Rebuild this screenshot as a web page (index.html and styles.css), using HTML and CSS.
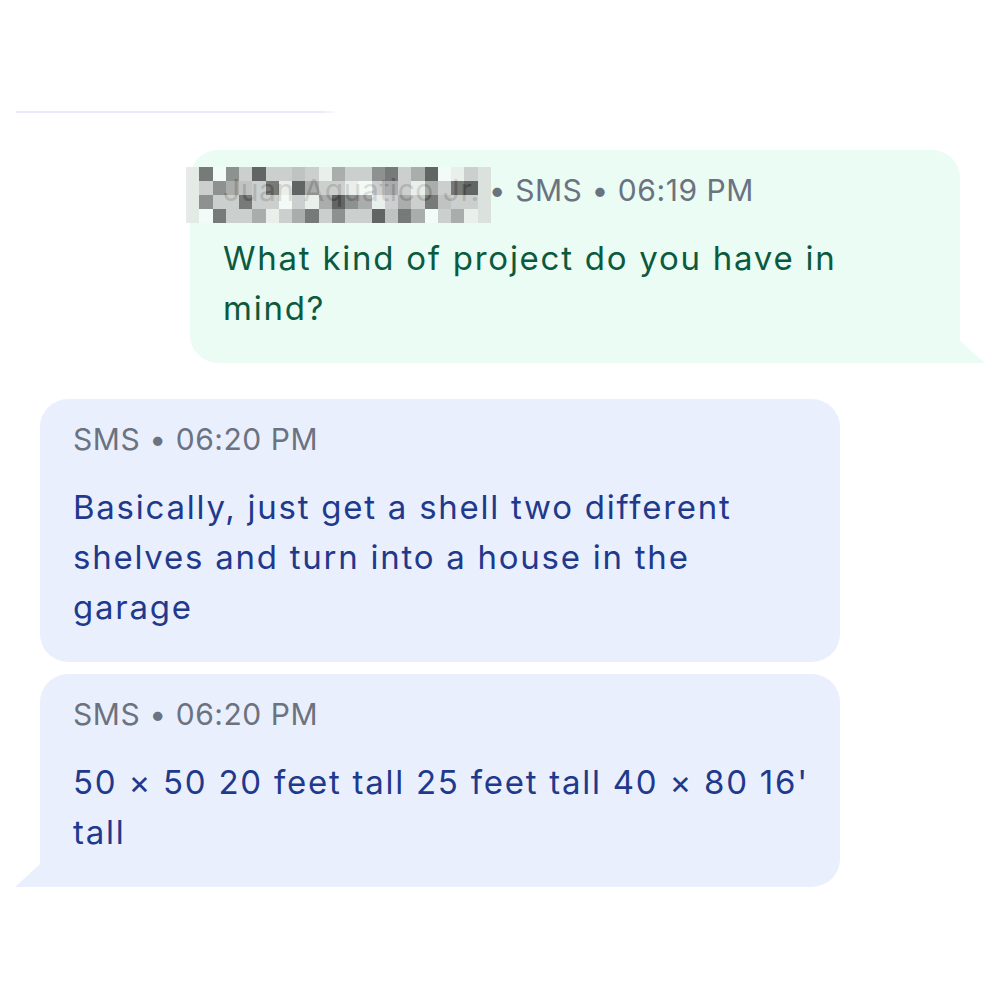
FILE: index.html
```html
<!DOCTYPE html>
<html>
<head>
<meta charset="utf-8">
<link rel="stylesheet" href="styles.css">
</head>
<body>
<div class="thread">
  <div class="divider"></div>
  <div class="bubble out">
    <div class="meta"><span class="name">Juan Aquatico Jr.<span class="mosaic"><i></i><i></i><i></i><i></i><i></i><i></i><i></i><i></i><i></i><i></i><i></i><i></i><i></i><i></i><i></i><i></i><i></i><i></i><i></i><i></i><i></i><i></i><i></i><i></i><i></i><i></i><i></i><i></i><i></i><i></i><i></i><i></i><i></i><i></i><i></i><i></i><i></i><i></i><i></i><i></i><i></i><i></i><i></i><i></i><i></i><i></i><i></i><i></i><i></i><i></i><i></i><i></i><i></i><i></i><i></i><i></i><i></i><i></i><i></i><i></i><i></i><i></i><i></i><i></i><i></i><i></i><i></i><i></i><i></i><i></i><i></i><i></i><i></i><i></i><i></i><i></i><i></i><i></i><i></i><i></i><i></i><i></i><i></i><i></i><i></i><i></i><i></i><i></i><i></i><i></i><i></i><i></i></span></span> <span class="dot">•</span> SMS <span class="dot">•</span> 06:19 PM</div>
    <div class="text">What kind of project do you have in mind?</div>
    <span class="tail"></span>
  </div>
  <div class="bubble in first">
    <div class="meta">SMS <span class="dot">•</span> 06:20 PM</div>
    <div class="text">Basically, just get a shell two different shelves and turn into a house in the garage</div>
  </div>
  <div class="bubble in last">
    <div class="meta">SMS <span class="dot">•</span> 06:20 PM</div>
    <div class="text">50 × 50 20 feet tall 25 feet tall 40 × 80 16' tall</div>
    <span class="tail"></span>
  </div>
</div>
</body>
</html>
```
FILE: styles.css
```css
html, body {
  margin: 0;
  padding: 0;
  background: #ffffff;
}
body {
  font-family: Inter, "Noto Sans", sans-serif;
}
.thread {
  padding-top: 111px;
  display: flex;
  flex-direction: column;
}
.divider {
  margin-left: 16px;
  width: 322px;
  height: 2px;
  background: linear-gradient(to right, #ebe9fb 95%, #ffffff);
  margin-bottom: 37px;
}
.bubble {
  position: relative;
  box-sizing: border-box;
  border-radius: 28px;
  padding: 22px 26px 30px 33px;
}
.bubble.out {
  margin-left: 190px;
  width: 770px;
  background: #eafcf3;
  border-bottom-right-radius: 0;
  margin-bottom: 37px;
}
.bubble.in {
  margin-left: 40px;
  width: 800px;
  background: #eaeffd;
}
.bubble.first {
  margin-top: -1px;
  margin-bottom: 12px;
}
.bubble.last {
  border-bottom-left-radius: 0;
}
.meta {
  font-size: 30px;
  line-height: 36px;
  letter-spacing: 0.55px;
  color: #6b7280;
  white-space: nowrap;
}
.dot {
  color: #6b7280;
}
.text {
  margin-top: 25px;
  font-size: 33px;
  line-height: 50px;
  letter-spacing: 1.75px;
}
.out .text { color: #0b5a3e; }
.in .text { color: #1f3a8c; }
.name {
  position: relative;
  color: #707070;
}
.mosaic {
  position: absolute;
  left: -37px;
  top: -5px;
  width: 305px;
  height: 56px;
  display: grid;
  grid-template-columns: repeat(23, 1fr);
  grid-template-rows: repeat(4, 1fr);
  opacity: 0.8;
}
.mosaic i {
  display: block;
  background: #c4c4c4;
}
.mosaic i:nth-child(3n) { background: #9a9a9a; }
.mosaic i:nth-child(5n+1) { background: #e9ecea; }
.mosaic i:nth-child(7n+2) { background: #5a5a5a; }
.mosaic i:nth-child(11n+4) { background: #777777; }
.mosaic i:nth-child(13n+6) { background: #404040; }
.mosaic i:nth-child(17n+3) { background: #f4fbf8; }
.mosaic i:nth-child(19n+9) { background: #b5b5b5; }
.mosaic i:nth-child(23n+1) { background: #e3e6e4; }
.mosaic i:nth-child(23n) { background: #d8dcda; }
.tail {
  position: absolute;
  bottom: 0;
  width: 0;
  height: 0;
}
.out .tail {
  right: -25px;
  border-bottom: 22px solid #eafcf3;
  border-right: 25px solid transparent;
}
.last .tail {
  left: -25px;
  border-bottom: 23px solid #eaeffd;
  border-left: 25px solid transparent;
}
```
